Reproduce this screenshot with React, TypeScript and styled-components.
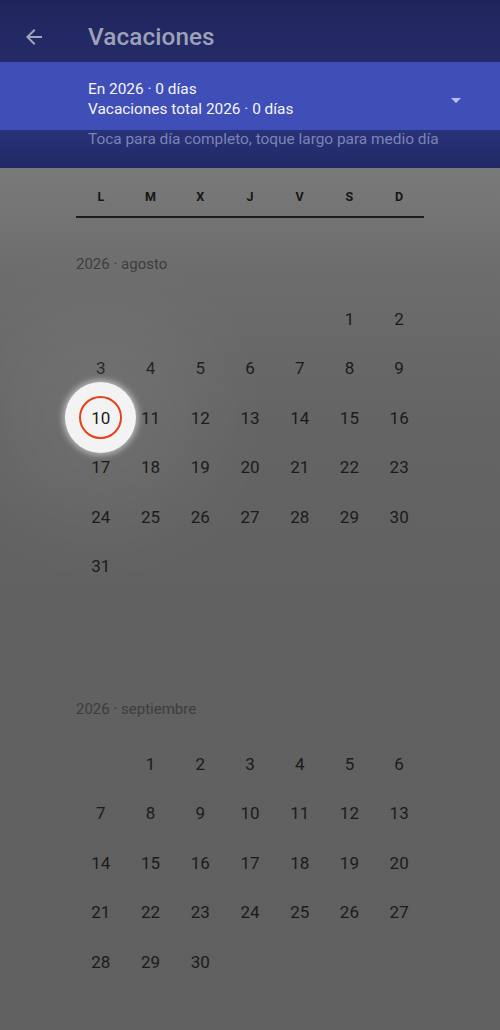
import React from 'react'
import styled, { createGlobalStyle } from 'styled-components'

const WEEKDAYS = ['L', 'M', 'X', 'J', 'V', 'S', 'D']

const MONTHS: { title: string; offset: number; days: number }[] = [
    { title: '2026 · agosto', offset: 5, days: 31 },
    { title: '2026 · septiembre', offset: 1, days: 30 },
]

const HIGHLIGHTED = { month: 0, day: 10 }

const App: React.FC = () => {
    return (
        <>
            <GlobalStyle />
            <Page>
                <TopBar>
                    <BackButton aria-label="Atrás">
                        <svg width="24" height="24" viewBox="0 0 24 24">
                            <path fill="currentColor" d="M20 11H7.83l5.59-5.59L12 4l-8 8 8 8 1.41-1.41L7.83 13H20v-2z" />
                        </svg>
                    </BackButton>
                    <Title>Vacaciones</Title>
                </TopBar>

                <SummaryBar>
                    <SummaryText>
                        <div>En 2026 · 0 días</div>
                        <div>Vacaciones total 2026 · 0 días</div>
                    </SummaryText>
                    <DropIcon width="24" height="24" viewBox="0 0 24 24">
                        <path fill="currentColor" d="M7 10l5 5 5-5z" />
                    </DropIcon>
                </SummaryBar>
                <Hint>Toca para día completo, toque largo para medio día</Hint>

                <CalendarArea>
                    <WeekHeader>
                        {WEEKDAYS.map(w => <WeekDay key={w}>{w}</WeekDay>)}
                    </WeekHeader>

                    {MONTHS.map((m, mi) => (
                        <Month key={m.title}>
                            <MonthTitle>{m.title}</MonthTitle>
                            <DayGrid>
                                {Array.from({ length: m.offset }).map((_, i) => <span key={'e' + i} />)}
                                {Array.from({ length: m.days }).map((_, i) => {
                                    const day = i + 1
                                    const lit = mi === HIGHLIGHTED.month && day === HIGHLIGHTED.day
                                    return (
                                        <DayCell key={day}>
                                            {lit && <Spotlight><Ring /></Spotlight>}
                                            <DayNumber>{day}</DayNumber>
                                        </DayCell>
                                    )
                                })}
                            </DayGrid>
                        </Month>
                    ))}
                </CalendarArea>
            </Page>
        </>
    )
}

export default App

const GlobalStyle = createGlobalStyle`
    html, body {
        margin: 0;
        padding: 0;
        background: #606060;
        font-family: Roboto, "Noto Sans", Arial, sans-serif;
    }
`

const Page = styled.div`
    width: 500px;
    height: 1030px;
    display: flex;
    flex-direction: column;
    overflow: hidden;
`

const TopBar = styled.div`
    height: 62px;
    flex-shrink: 0;
    display: flex;
    align-items: center;
    background: linear-gradient(to bottom, #1f255c, #242b68);
`

const BackButton = styled.div`
    width: 68px;
    height: 62px;
    display: flex;
    align-items: center;
    justify-content: center;
    color: #a3a6ba;
    margin-right: 20px;
    padding-top: 12px;
    box-sizing: border-box;
`

const Title = styled.div`
    font-size: 24.3px;
    font-weight: 500;
    color: #9ea1b6;
    padding-top: 11px;
    letter-spacing: 0.1px;
`

const SummaryBar = styled.div`
    height: 68px;
    flex-shrink: 0;
    background: #3f4fb7;
    display: flex;
    align-items: center;
    padding-left: 88px;
    padding-right: 32px;
    box-sizing: border-box;
    padding-top: 6px;
`

const SummaryText = styled.div`
    flex: 1;
    font-size: 15.4px;
    line-height: 20px;
    color: #f4f5fb;
`

const DropIcon = styled.svg`
    color: #b9c0ef;
    margin-top: 2px;
`

const Hint = styled.div`
    height: 38px;
    flex-shrink: 0;
    padding-left: 88px;
    font-size: 15.4px;
    color: #7c84b3;
    background: linear-gradient(to bottom, #29337a, #202864);
    line-height: 18px;
    box-sizing: border-box;
`

const CalendarArea = styled.div`
    flex: 1;
    padding: 0 76px;
    background: linear-gradient(to bottom, #7a7a7a 0px, #6c6c6c 110px, #646464 260px, #616161 420px, #606060 100%);
`

const WeekHeader = styled.div`
    display: grid;
    grid-template-columns: repeat(7, 1fr);
    height: 50px;
    padding-top: 20px;
    box-sizing: border-box;
    border-bottom: 2px solid #1d1d1d;
`

const WeekDay = styled.div`
    text-align: center;
    font-size: 12.5px;
    font-weight: 700;
    color: #151515;
    line-height: 18px;
`

const Month = styled.div`
    padding-top: 36px;
    margin-bottom: 72px;
`

const MonthTitle = styled.div`
    font-size: 15px;
    color: #3d3d3d;
    height: 20px;
    line-height: 20px;
    margin-bottom: 20px;
`

const DayGrid = styled.div`
    display: grid;
    grid-template-columns: repeat(7, 1fr);
    grid-auto-rows: 49.5px;
`

const DayCell = styled.div`
    position: relative;
    display: flex;
    align-items: center;
    justify-content: center;
`

const DayNumber = styled.span`
    position: relative;
    font-size: 17px;
    color: #1b1b1b;
`

const Spotlight = styled.div`
    position: absolute;
    left: 50%;
    top: 50%;
    width: 71px;
    height: 71px;
    margin: -35.5px 0 0 -35.5px;
    border-radius: 50%;
    background: #f3f3f3;
    box-shadow:
        0 0 6px 2px rgba(255, 255, 255, 0.55),
        0 0 100px 70px rgba(255, 255, 255, 0.07);
    display: flex;
    align-items: center;
    justify-content: center;
`

const Ring = styled.div`
    width: 39px;
    height: 39px;
    border-radius: 50%;
    border: 2.5px solid #e5421b;
`
